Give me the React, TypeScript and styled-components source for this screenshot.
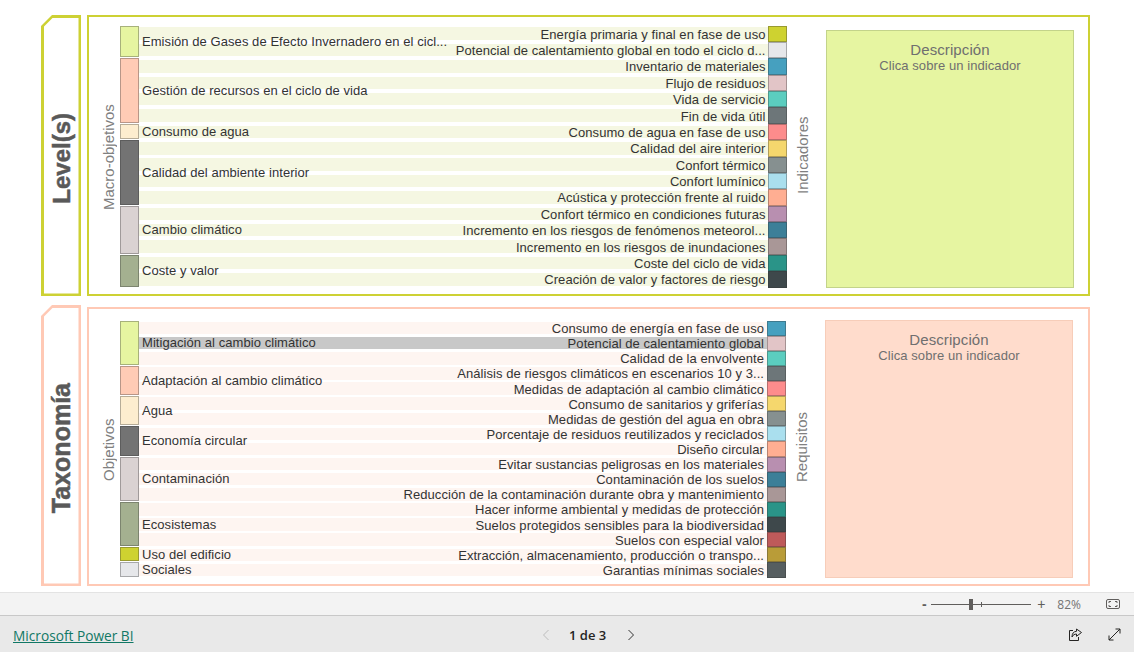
import styled, { createGlobalStyle } from "styled-components";

const GlobalStyle = createGlobalStyle`
  html, body {
    margin: 0;
    padding: 0;
    background: #fff;
    font-family: "Liberation Sans", Arial, sans-serif;
  }
`;

const Page = styled.div`
  width: 1134px;
  height: 652px;
  display: flex;
  flex-direction: column;
  overflow: hidden;
`;

const Canvas = styled.div`
  height: 577px;
  padding: 15px 44px 0 41px;
  display: flex;
  flex-direction: column;
  gap: 9px;
`;

const Section = styled.section`
  height: 281px;
  display: flex;
  gap: 6px;
`;

const TitleBox = styled.div<{ $color: string }>`
  position: relative;
  width: 40px;
  flex: none;
  display: flex;
  align-items: center;
  justify-content: center;
  background: ${(p) => p.$color};
  clip-path: polygon(11px 0, 100% 0, 100% 100%, 0 100%, 0 11px);

  &::before {
    content: "";
    position: absolute;
    inset: 2.5px;
    background: #fff;
    clip-path: polygon(9.5px 0, 100% 0, 100% 100%, 0 100%, 0 9.5px);
  }
`;

const Title = styled.h2<{ $size: number }>`
  position: relative;
  margin: 6px 0 0 1px;
  writing-mode: vertical-rl;
  transform: rotate(180deg);
  font-size: ${(p) => p.$size}px;
  font-weight: 700;
  color: #595959;
  -webkit-text-stroke: 0.5px #595959;
  white-space: nowrap;
`;

const Panel = styled.div<{ $color: string; $top: number }>`
  flex: 1;
  margin-top: ${(p) => p.$top}px;
  border: 2.5px solid ${(p) => p.$color};
  display: flex;
`;

const AxisLabel = styled.div<{ $offset: number }>`
  flex: none;
  width: 19px;
  margin-left: ${(p) => p.$offset}px;
  display: flex;
  align-items: center;
  justify-content: center;
  writing-mode: vertical-rl;
  transform: rotate(180deg);
  font-size: 15px;
  color: #808080;
  white-space: nowrap;
`;

const ChartArea = styled.div<{ $top: number; $bottom: number }>`
  flex: none;
  display: flex;
  margin-left: 10px;
  padding: ${(p) => p.$top}px 0 ${(p) => p.$bottom}px;
`;

const Chart = styled.div<{ $rows: number; $width: number }>`
  width: ${(p) => p.$width}px;
  margin-left: 2px;
  display: grid;
  grid-template-columns: 19px 1fr 19px;
  grid-template-rows: repeat(${(p) => p.$rows}, minmax(0, 1fr));
`;

const GroupNode = styled.div<{ $color: string; $start: number; $span: number }>`
  grid-column: 1;
  grid-row: ${(p) => p.$start} / span ${(p) => p.$span};
  margin-bottom: 1px;
  background: ${(p) => p.$color};
  border: 1px solid color-mix(in srgb, ${(p) => p.$color} 65%, #333);
`;

const GroupLabel = styled.div<{ $start: number; $span: number }>`
  grid-column: 2;
  grid-row: ${(p) => p.$start} / span ${(p) => p.$span};
  z-index: 1;
  align-self: center;
  padding-left: 3px;
  font-size: 13px;
  line-height: 14px;
  letter-spacing: 0.06px;
  color: #333;
  white-space: nowrap;
`;

const Band = styled.div<{ $row: number; $color: string }>`
  grid-column: 2;
  grid-row: ${(p) => p.$row};
  align-self: center;
  height: 12.5px;
  background: ${(p) => p.$color};
`;

const ItemLabel = styled.div<{ $row: number }>`
  grid-column: 2;
  grid-row: ${(p) => p.$row};
  z-index: 1;
  align-self: center;
  justify-self: end;
  padding: 2px 2.500px 0 0;
  font-size: 13px;
  line-height: 14px;
  letter-spacing: 0.06px;
  color: #333;
  white-space: nowrap;
`;

const ItemNode = styled.div<{ $row: number; $color: string }>`
  grid-column: 3;
  grid-row: ${(p) => p.$row};
  background: ${(p) => p.$color};
  border: 1px solid color-mix(in srgb, ${(p) => p.$color} 65%, #333);
`;

const DescriptionBox = styled.div<{ $fill: string; $edge: string; $top: number; $left: number }>`
  width: 248px;
  flex: none;
  box-sizing: border-box;
  margin: ${(p) => p.$top}px 0 6px ${(p) => p.$left}px;
  padding-top: 10px;
  background: ${(p) => p.$fill};
  border: 1px solid ${(p) => p.$edge};
  text-align: center;
  color: #6f6f6f;
`;

const DescriptionTitle = styled.div`
  font-size: 15px;
  line-height: 18px;
  letter-spacing: 0.1px;
`;

const DescriptionHint = styled.div`
  font-size: 13px;
  line-height: 14px;
  letter-spacing: 0.08px;
`;

const ZoomBar = styled.div`
  height: 22px;
  display: flex;
  align-items: center;
  justify-content: flex-end;
  background: #f3f3f3;
  border-top: 1px solid #e3e3e3;
  border-bottom: 1px solid #c8c8c8;
  color: #605e5c;
`;

const ZoomSign = styled.span<{ $bold?: boolean }>`
  width: 12px;
  text-align: center;
  font-size: 14px;
  line-height: 14px;
  font-weight: ${(p) => (p.$bold ? 700 : 400)};
`;

const SliderTrack = styled.div`
  position: relative;
  width: 100px;
  height: 1px;
  margin: 0 4px 0 1px;
  background: #605e5c;
`;

const SliderTick = styled.span`
  position: absolute;
  left: 50px;
  top: -2px;
  width: 1px;
  height: 5px;
  background: #605e5c;
`;

const SliderThumb = styled.span`
  position: absolute;
  left: 38px;
  top: -5px;
  width: 4px;
  height: 11px;
  background: #605e5c;
`;

const ZoomValue = styled.span`
  margin-left: 10px;
  font-family: "Open Sans", sans-serif;
  font-size: 12px;
  color: #737373;
`;

const FitButton = styled.svg`
  margin: 0 14px 0 25px;
  display: block;
`;

const Footer = styled.footer`
  flex: 1;
  position: relative;
  display: flex;
  align-items: center;
  justify-content: space-between;
  padding: 1px 13px 0;
  background: #e9e9e9;
`;

const PowerBiLink = styled.a`
  margin-top: 2px;
  font-family: "Open Sans", sans-serif;
  font-size: 13.7px;
  color: #117865;
  text-decoration: underline;
`;

const Pager = styled.div`
  position: absolute;
  left: 542px;
  top: 11px;
  display: flex;
  align-items: center;
`;

const PageCount = styled.span`
  width: 37px;
  margin: 0 21px 0 19px;
  font-family: "Open Sans", sans-serif;
  font-size: 13px;
  font-weight: 600;
  line-height: 16px;
  color: #252423;
  white-space: nowrap;
`;

const FooterIcons = styled.div`
  margin-left: auto;
  display: flex;
  align-items: center;
  gap: 25px;
`;

type Group = { name: string; span: number; color: string };
type Item = { name: string; color: string; active?: boolean };

const levelGroups: Group[] = [
  { name: "Emisión de Gases de Efecto Invernadero en el cicl...", span: 2, color: "#e6f5a1" },
  { name: "Gestión de recursos en el ciclo de vida", span: 4, color: "#ffcbb5" },
  { name: "Consumo de agua", span: 1, color: "#fdedcf" },
  { name: "Calidad del ambiente interior", span: 4, color: "#737373" },
  { name: "Cambio climático", span: 3, color: "#dad2d2" },
  { name: "Coste y valor", span: 2, color: "#a4b090" },
];

const levelItems: Item[] = [
  { name: "Energía primaria y final en fase de uso", color: "#ced230" },
  { name: "Potencial de calentamiento global en todo el ciclo d...", color: "#e6e7ea" },
  { name: "Inventario de materiales", color: "#46a0bf" },
  { name: "Flujo de residuos", color: "#e2c5c7" },
  { name: "Vida de servicio", color: "#5bcdbf" },
  { name: "Fin de vida útil", color: "#6d7679" },
  { name: "Consumo de agua en fase de uso", color: "#fd8c8c" },
  { name: "Calidad del aire interior", color: "#f5d76d" },
  { name: "Confort térmico", color: "#869090" },
  { name: "Confort lumínico", color: "#aadfee" },
  { name: "Acústica y protección frente al ruido", color: "#ffae92" },
  { name: "Confort térmico en condiciones futuras", color: "#b88fb0" },
  { name: "Incremento en los riesgos de fenómenos meteorol...", color: "#3c7f98" },
  { name: "Incremento en los riesgos de inundaciones", color: "#a99797" },
  { name: "Coste del ciclo de vida", color: "#2a9488" },
  { name: "Creación de valor y factores de riesgo", color: "#3e484b" },
];

const taxonomyGroups: Group[] = [
  { name: "Mitigación al cambio climático", span: 3, color: "#e6f5a1" },
  { name: "Adaptación al cambio climático", span: 2, color: "#ffcbb5" },
  { name: "Agua", span: 2, color: "#fdedcf" },
  { name: "Economía circular", span: 2, color: "#737373" },
  { name: "Contaminación", span: 3, color: "#dad2d2" },
  { name: "Ecosistemas", span: 3, color: "#a4b090" },
  { name: "Uso del edificio", span: 1, color: "#ced230" },
  { name: "Sociales", span: 1, color: "#e6e7ea" },
];

const taxonomyItems: Item[] = [
  { name: "Consumo de energía en fase de uso", color: "#46a0bf" },
  { name: "Potencial de calentamiento global", color: "#e2c5c7", active: true },
  { name: "Calidad de la envolvente", color: "#5bcdbf" },
  { name: "Análisis de riesgos climáticos en escenarios 10 y 3...", color: "#6d7679" },
  { name: "Medidas de adaptación al cambio climático", color: "#fd8c8c" },
  { name: "Consumo de sanitarios y griferías", color: "#f5d76d" },
  { name: "Medidas de gestión del agua en obra", color: "#869090" },
  { name: "Porcentaje de residuos reutilizados y reciclados", color: "#aadfee" },
  { name: "Diseño circular", color: "#ffae92" },
  { name: "Evitar sustancias peligrosas en los materiales", color: "#b88fb0" },
  { name: "Contaminación de los suelos", color: "#3c7f98" },
  { name: "Reducción de la contaminación durante obra y mantenimiento", color: "#a99797" },
  { name: "Hacer informe ambiental y medidas de protección", color: "#2a9488" },
  { name: "Suelos protegidos sensibles para la biodiversidad", color: "#3e484b" },
  { name: "Suelos con especial valor", color: "#be5a5a" },
  { name: "Extracción, almacenamiento, producción o transpo...", color: "#b99c38" },
  { name: "Garantias mínimas sociales", color: "#565e60" },
];

type SankeyProps = {
  groups: Group[];
  items: Item[];
  bandColor: string;
  width: number;
};

function Sankey({ groups, items, bandColor, width }: SankeyProps) {
  let start = 1;
  const placed = groups.map((g) => {
    const row = start;
    start += g.span;
    return { ...g, row };
  });
  return (
    <Chart $rows={items.length} $width={width}>
      {items.map((item, i) => (
        <Band key={item.name} $row={i + 1} $color={item.active ? "#c8c8c8" : bandColor} />
      ))}
      {placed.map((g) => (
        <GroupNode key={g.name} $color={g.color} $start={g.row} $span={g.span} />
      ))}
      {placed.map((g) => (
        <GroupLabel key={g.name} $start={g.row} $span={g.span}>
          {g.name}
        </GroupLabel>
      ))}
      {items.map((item, i) => (
        <ItemLabel key={item.name} $row={i + 1}>
          {item.name}
        </ItemLabel>
      ))}
      {items.map((item, i) => (
        <ItemNode key={item.name} $row={i + 1} $color={item.color} />
      ))}
    </Chart>
  );
}

export default function App() {
  return (
    <Page>
      <GlobalStyle />
      <Canvas>
        <Section>
          <TitleBox $color="#cdd134">
            <Title $size={24}>Level(s)</Title>
          </TitleBox>
          <Panel $color="#cdd134" $top={0}>
            <ChartArea $top={8.5} $bottom={6.5}>
              <AxisLabel $offset={0}>Macro-objetivos</AxisLabel>
              <Sankey groups={levelGroups} items={levelItems} bandColor="#f5f7e2" width={667} />
            </ChartArea>
            <AxisLabel $offset={6}>Indicadores</AxisLabel>
            <DescriptionBox $fill="#e6f5a1" $edge="#c3d38a" $top={12.5} $left={14}>
              <DescriptionTitle>Descripción</DescriptionTitle>
              <DescriptionHint>Clica sobre un indicador</DescriptionHint>
            </DescriptionBox>
          </Panel>
        </Section>
        <Section>
          <TitleBox $color="#ffc9b5">
            <Title $size={25}>Taxonomía</Title>
          </TitleBox>
          <Panel $color="#ffc9b5" $top={2}>
            <ChartArea $top={11.5} $bottom={6.5}>
              <AxisLabel $offset={0}>Objetivos</AxisLabel>
              <Sankey groups={taxonomyGroups} items={taxonomyItems} bandColor="#fef5f1" width={665.5} />
            </ChartArea>
            <AxisLabel $offset={6.5}>Requisitos</AxisLabel>
            <DescriptionBox $fill="#ffdccc" $edge="#f7cdb9" $top={10.5} $left={14}>
              <DescriptionTitle>Descripción</DescriptionTitle>
              <DescriptionHint>Clica sobre un indicador</DescriptionHint>
            </DescriptionBox>
          </Panel>
        </Section>
      </Canvas>
      <ZoomBar>
        <ZoomSign $bold>-</ZoomSign>
        <SliderTrack>
          <SliderThumb />
          <SliderTick />
        </SliderTrack>
        <ZoomSign>+</ZoomSign>
        <ZoomValue>82%</ZoomValue>
        <FitButton width="14" height="10" viewBox="0 0 14 10" fill="none" stroke="#605e5c">
          <rect x="0.5" y="0.5" width="13" height="9" rx="1.5" />
          <path d="M3 4V2.5H5M9 2.5h2V4M11 6v1.5H9M5 7.5H3V6" />
        </FitButton>
      </ZoomBar>
      <Footer>
        <PowerBiLink href="#">Microsoft Power BI</PowerBiLink>
        <Pager>
          <svg width="8" height="12" viewBox="0 0 8 12" fill="none" stroke="#bdbdbd">
            <path d="M6.5 1 1.5 6l5 5" />
          </svg>
          <PageCount>1 de 3</PageCount>
          <svg width="8" height="12" viewBox="0 0 8 12" fill="none" stroke="#333">
            <path d="M1.5 1l5 5-5 5" />
          </svg>
        </Pager>
        <FooterIcons>
          <svg width="15" height="14" viewBox="0 0 15 14" fill="none" stroke="#252423">
            <path d="M5 2.500H1.500v10h9V9" />
            <path d="M8.500 1v2.300C5.500 3.500 4 5.500 4 9c1-2 2.500-3 4.500-3v2.300L13.500 4.500z" />
          </svg>
          <svg width="13" height="13" viewBox="0 0 13 13" fill="none" stroke="#252423">
            <path d="M1 12 12 1M7.500 1H12v4.500M1 7.500V12h4.500" />
          </svg>
        </FooterIcons>
      </Footer>
    </Page>
  );
}
